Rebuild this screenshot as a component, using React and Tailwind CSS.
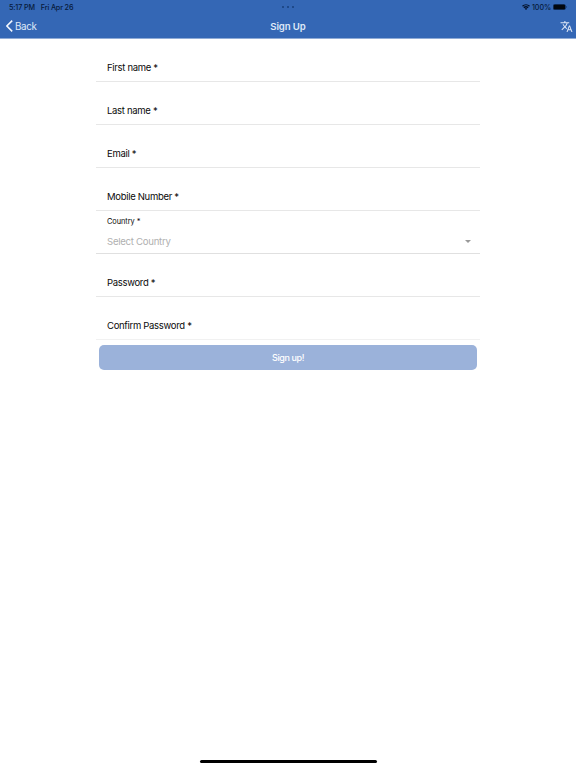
const FIELDS_BEFORE = ['First name *', 'Last name *', 'Email *', 'Mobile Number *'];
const FIELDS_AFTER = ['Password *', 'Confirm Password *'];

function Field({ label }) {
  return (
    <label className="flex h-[43px] items-end border-b border-[#e7e7e7] pb-[5px] pl-[11px] text-[9.5px] leading-4 tracking-[-0.31px] text-[#0a0a0a] last-of-type:border-[#f1f1f1]">
      {label}
    </label>
  );
}

function StatusBar() {
  return (
    <div className="grid h-[14px] grid-cols-3 items-center text-[7.2px] font-medium leading-[12px] text-[#071a3a]">
      <div className="flex gap-[6px] pl-[9px] pt-[2px] tracking-[-0.14px]">
        <span>5:17 PM</span>
        <span>Fri Apr 26</span>
      </div>
      <div className="flex justify-center gap-[3px]">
        <i className="size-[2px] rounded-full bg-[#173f7d]" />
        <i className="size-[2px] rounded-full bg-[#173f7d]" />
        <i className="size-[2px] rounded-full bg-[#173f7d]" />
      </div>
      <div className="flex items-center justify-end pr-[9px]">
        <svg className="mr-[2px]" width="8" height="6" viewBox="0 0 16 12" fill="none" stroke="#04122b" strokeWidth="2.8">
          <path d="M1 4.6a10 10 0 0 1 14 0M3.7 7.5a6.2 6.2 0 0 1 8.6 0" />
          <path d="M8 11.8 5.5 9.3a3.6 3.6 0 0 1 5 0z" fill="#04122b" stroke="none" />
        </svg>
        <span className="pt-[2px] tracking-[-0.1px]">100%</span>
        <svg className="ml-[2px]" width="14" height="6" viewBox="0 0 14 6">
          <rect x=".25" y=".25" width="12.2" height="5.5" rx="1.6" fill="#02070f" stroke="#173f7d" strokeWidth=".5" />
          <path d="M13 2q.8.2.8 1T13 4z" fill="#173f7d" />
        </svg>
      </div>
    </div>
  );
}

export default function App() {
  return (
    <div className="flex h-[768px] w-[576px] flex-col bg-white font-['Inter','Liberation_Sans',sans-serif]">
      <header className="h-[39px] border-b border-[#8fabd6] bg-[#3467b5]">
        <StatusBar />
        <div className="grid h-6 grid-cols-3 items-center text-[9.8px] text-[#dfe9f8]">
          <button className="flex items-center gap-[2px] pl-[6px] tracking-[-0.3px]">
            <svg width="7" height="12" viewBox="0 0 7 12" fill="none" stroke="#f3f7fd" strokeWidth="1.5">
              <path d="M6.2.6.9 6l5.3 5.4" />
            </svg>
            <span className="pt-[2px]">Back</span>
          </button>
          <h1 className="pt-[2px] text-center text-[9.6px] font-semibold tracking-[-0.08px]">Sign Up</h1>
          <div className="flex justify-end pr-[3px]">
            <svg width="13" height="13" viewBox="0 0 24 24" fill="#dce6f6">
              <path d="m12.87 15.07-2.54-2.51.03-.03A17.52 17.52 0 0 0 14.07 6H17V4h-7V2H8v2H1v1.99h11.17C11.5 7.92 10.44 9.75 9 11.35 8.07 10.32 7.3 9.19 6.69 8h-2c.73 1.63 1.73 3.17 2.98 4.56l-5.09 5.02L4 19l5-5 3.11 3.11.76-2.04zM18.5 10h-2L12 22h2l1.12-3h4.75L21 22h2l-4.5-12zm-2.62 7 1.62-4.33L19.12 17h-3.24z" />
            </svg>
          </div>
        </div>
      </header>

      <form className="mx-auto w-[384px]">
        {FIELDS_BEFORE.map((label) => <Field key={label} label={label} />)}
        <div className="flex h-[43px] flex-col border-b border-[#e0e0e0] pl-[11px] pr-[9px] pt-[4px]">
          <span className="text-[7.4px] leading-[14px] tracking-[-0.05px] text-[#0a0a0a]">Country *</span>
          <div className="mt-[5px] flex items-center justify-between text-[9.6px] leading-4 tracking-[-0.27px] text-[#b0b0b0]">
            Select Country
            <svg className="-mt-px" width="6" height="3" viewBox="0 0 6 3" fill="#999"><path d="M0 0h6L3 3z" /></svg>
          </div>
        </div>
        {FIELDS_AFTER.map((label) => <Field key={label} label={label} />)}
        <button type="button" className="ml-[3px] mt-[5px] flex h-[25px] w-[378px] items-center justify-center rounded-[5px] bg-[#9bb2da] text-[9px] font-medium tracking-[-0.4px] text-white">
          Sign up!
        </button>
      </form>

      <div className="mx-auto mb-[5px] mt-auto h-[3px] w-[177px] rounded-full bg-black" />
    </div>
  );
}
